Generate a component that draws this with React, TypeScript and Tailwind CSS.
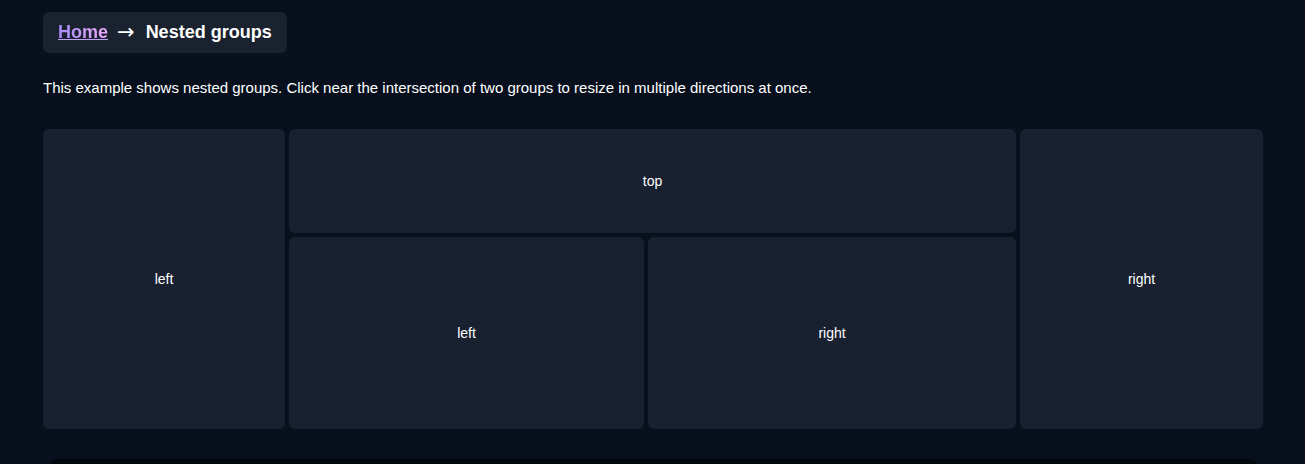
export default function App() {
  const panel = "bg-[#192130] rounded-md flex items-center justify-center text-[14px] text-white";
  return (
    <div className="min-h-[464px] h-[464px] overflow-hidden bg-[#08101e] text-white" style={{ fontFamily: '"Liberation Sans", Arial, sans-serif' }}>
      <div className="w-[1220px] ml-[43px] pt-[12px]">
        <div className="inline-flex items-center h-[41px] px-[15px] rounded-md bg-[#1a212f] text-[18px] font-bold">
          <a className="underline bg-gradient-to-r from-[#a78bfa] to-[#f0abfc] bg-clip-text text-transparent decoration-[#c4a1f8]" href="#">Home</a>
          <span className="ml-[9px] mr-[11px] font-normal text-[21px] leading-none" style={{ fontFamily: '"DejaVu Sans", sans-serif' }}>→</span>
          <span>Nested groups</span>
        </div>
        <p className="mt-[25px] text-[15px] leading-[20px]">This example shows nested groups. Click near the intersection of two groups to resize in multiple directions at once.</p>
        <div className="mt-[31px] flex gap-[4px] h-[300px]">
          <div className={panel + " w-[242px]"}>left</div>
          <div className="flex flex-col gap-[4px] w-[727px]">
            <div className={panel + " h-[104px]"}>top</div>
            <div className="flex gap-[4px] flex-1">
              <div className={panel + " w-[355px]"}>left</div>
              <div className={panel + " flex-1"}>right</div>
            </div>
          </div>
          <div className={panel + " flex-1"}>right</div>
        </div>
        <div className="mt-[30px] ml-[7px] w-[1207px] h-[40px] rounded-md bg-[#03070e]"></div>
      </div>
    </div>
  );
}
